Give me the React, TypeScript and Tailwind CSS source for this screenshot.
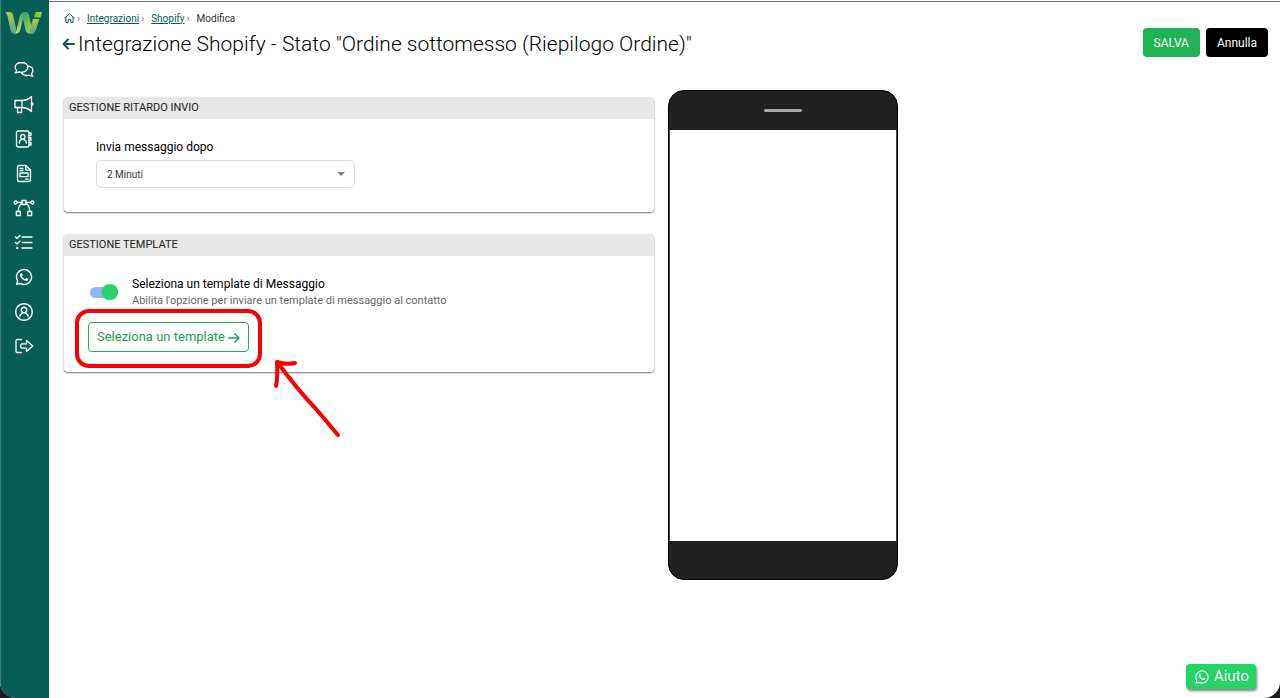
import { useState, type ReactNode } from "react";
import { LiaUserCircle, LiaWhatsapp } from "react-icons/lia";

function NavIcon({ children }: { children: ReactNode }) {
    return (
        <svg
            viewBox="0 0 22 22"
            className="size-[22px]"
            fill="none"
            stroke="currentColor"
            strokeWidth="1.3"
            strokeLinecap="round"
            strokeLinejoin="round"
            aria-hidden="true"
        >
            {children}
        </svg>
    );
}

const navItems: { label: string; icon: ReactNode }[] = [
    {
        label: "Chat",
        icon: (
            <NavIcon>
                <path d="M8.500 3.500C4.900 3.500 2.200 5.500 2.200 8.300c0 1.300.5 2.300 1.400 3.200-.1.900-.6 1.700-1.400 2.400 1.400 0 2.700-.4 3.700-1 .8.200 1.700.4 2.600.4 3.600 0 6.400-2.200 6.400-5s-2.800-4.800-6.400-4.800z" />
                <path d="M15.400 7.200c2.600.5 4.500 2.200 4.500 4.400 0 1.200-.5 2.200-1.400 3.100.1.900.6 1.800 1.400 2.500-1.400 0-2.700-.4-3.700-1-.7.200-1.500.3-2.400.3-2.300 0-4.200-.9-5.200-2.500" />
            </NavIcon>
        ),
    },
    {
        label: "Campagne",
        icon: (
            <NavIcon>
                <path d="M2 6.500h7v7H2zM9 6.500c3.500 0 6.500-1 9.500-4v15c-3-3-6-4-9.500-4M18.500 8.500c1 .2 1.500.7 1.500 1.500s-.5 1.300-1.500 1.500" />
                <path d="M4.500 13.500v5h4v-5" />
            </NavIcon>
        ),
    },
    {
        label: "Contatti",
        icon: (
            <NavIcon>
                <rect x="3.500" y="3" width="12.500" height="16" rx="1.800" />
                <circle cx="9.800" cy="8.700" r="2.200" />
                <path d="M6.300 15c0-2.200 1.400-3.600 3.500-3.600s3.500 1.400 3.500 3.600M16 5h2v2.500h-2M16 9.700h2v2.500h-2M16 14.500h2V17h-2" />
            </NavIcon>
        ),
    },
    {
        label: "Template",
        icon: (
            <NavIcon>
                <path d="M6.500 2.500H13L17.500 7v9.500c0 1.200-.8 2-2 2h-9c-1.200 0-2-.8-2-2v-12c0-1.200.8-2 2-2z" />
                <path d="M12.800 2.700v4.500h4.500M7 5.500h3M7 7.700h3M7 10h8v3.700H7zM12.500 16.200H15" />
            </NavIcon>
        ),
    },
    {
        label: "Integrazioni",
        icon: (
            <NavIcon>
                <path d="M9 3.500h4v4H9zM3.300 14.500h4v4h-4zM14.700 14.500h4v4h-4z" />
                <circle cx="2.600" cy="5.500" r="1.500" />
                <circle cx="19.400" cy="5.500" r="1.500" />
                <path d="M4.200 5.500H9M13 5.500h4.800M9 6.500c-2.500 1.200-3.700 4-3.700 8M13 6.500c2.500 1.200 3.700 4 3.700 8" />
            </NavIcon>
        ),
    },
    {
        label: "Report",
        icon: (
            <NavIcon>
                <path d="M9 5h10M9 10.500h10M9 16h10M2.500 5L4 6.500 7 3.500M2.500 10.500L4 12l3-3" />
                <circle cx="4.200" cy="16" r=".5" />
            </NavIcon>
        ),
    },
    { label: "WhatsApp", icon: <LiaWhatsapp className="size-[22px]" /> },
    { label: "Profilo", icon: <LiaUserCircle className="size-[22px]" /> },
    {
        label: "Esci",
        icon: (
            <NavIcon>
                <path d="M8.500 4.500H4.300c-.8 0-1.300.5-1.300 1.300v10.400c0 .8.500 1.300 1.300 1.300h4.200" />
                <path d="M13.500 5.500L19.700 11l-6.200 5.500v-3.300H9c-.7 0-1.200-.5-1.200-1.200V10c0-.7.5-1.200 1.200-1.200h4.500z" />
            </NavIcon>
        ),
    },
];

function Logo() {
    return (
        <svg viewBox="0 0 38 24" className="h-6 w-[38px]" fill="none" aria-hidden="true">
            <defs>
                <linearGradient id="stem" x1="0" y1="0" x2="0" y2="1">
                    <stop offset="0" stopColor="#b0c952" />
                    <stop offset="1" stopColor="#4fae7b" />
                </linearGradient>
                <linearGradient id="rise" x1="0" y1="1" x2="0" y2="0">
                    <stop offset="0" stopColor="#cfdc66" />
                    <stop offset="1" stopColor="#3fa679" />
                </linearGradient>
                <linearGradient id="fold" x1="0" y1="0" x2="1" y2="1">
                    <stop offset="0" stopColor="#2f9c74" />
                    <stop offset="1" stopColor="#c4d85c" />
                </linearGradient>
                <linearGradient id="dot" x1="0" y1="0" x2="1" y2="0">
                    <stop offset="0" stopColor="#6fb52c" />
                    <stop offset="1" stopColor="#b4d334" />
                </linearGradient>
            </defs>
            <path d="M0 1h4.500c2 0 3 1 3.500 3l3 13c.5 2 1 3.500 1 5.500H9.500c-2.500 0-3.500-1-4-3L2.500 5C2 3 1.500 2 0 1z" fill="url(#stem)" />
            <path d="M8.500 22.500c2 0 2.600-1.300 3-3L14.500 6c.8-3.200 2.500-5 6-5-1 1-1.300 2-1.700 3.500L15.500 18c-.7 2.900-2 4.500-4.500 4.500z" fill="url(#rise)" />
            <path d="M17.500 1h2.500c2.500 0 3.300 1 3.800 3l3.200 14c.5 2 .8 3 2 4.500h-4.500c-2.500 0-3.500-1.200-4-3.500L18 8z" fill="url(#fold)" />
            <path d="M25.500 22.500c-1.500 0-1.500-1.500-1-3L28 8h6.300l-3.100 10c-1 3-2.200 4.500-5.200 4.500z" fill="url(#stem)" />
            <path d="M30.500 1h6.500l-1.500 5.500H29z" fill="url(#dot)" />
        </svg>
    );
}

function Sidebar() {
    return (
        <aside className="flex w-[49px] shrink-0 flex-col items-center rounded-bl-xl border-l border-[#3d8177] bg-[#075e54] pt-[11px] pr-0.5">
            <a href="#home" aria-label="Home">
                <Logo />
            </a>
            <nav className="mt-6">
                <ul className="flex h-[298px] flex-col justify-between">
                    {navItems.map(({ label, icon }) => (
                        <li key={label}>
                            <a href={`#${label.toLowerCase()}`} aria-label={label} className="block text-white">
                                {icon}
                            </a>
                        </li>
                    ))}
                </ul>
            </nav>
        </aside>
    );
}

function Breadcrumbs() {
    return (
        <nav className="flex h-5 items-center text-[10px] text-[#333]">
            <a href="#home" aria-label="Home" className="text-[#075e54]">
                <svg viewBox="0 0 11 10" className="h-[10px] w-[11px]" fill="none" stroke="currentColor" aria-hidden="true">
                    <path d="M.7 5L5.500.8 10.300 5M1.900 4.200v5.200h2.300V6.300h2.600v3.100h2.300V4.200" strokeLinejoin="round" strokeLinecap="round" />
                </svg>
            </a>
            <span className="ml-0.5 text-gray-500">›</span>
            <a href="#integrazioni" className="ml-[7px] text-[#075e54] underline">Integrazioni</a>
            <span className="ml-0.5 text-gray-500">›</span>
            <a href="#shopify" className="ml-[7px] text-[#075e54] underline">Shopify</a>
            <span className="ml-0.5 text-gray-500">›</span>
            <span className="ml-[7px]">Modifica</span>
        </nav>
    );
}

function Card({ title, children }: { title: string; children: ReactNode }) {
    return (
        <section className="rounded-[4px] bg-white shadow-[0_1px_2px_rgba(0,0,0,0.55)]">
            <h2 className="rounded-t-[4px] bg-[#e7e7e7] px-[5px] text-[11px] leading-[22px] text-[#222]">{title}</h2>
            {children}
        </section>
    );
}

function PhonePreview() {
    return (
        <div className="flex h-[490px] w-[230px] shrink-0 flex-col overflow-hidden rounded-2xl border border-black bg-[#202020]">
            <div className="flex h-[39px] items-center justify-center">
                <span className="h-[3px] w-[38px] rounded-full bg-[#aaa6a8]" />
            </div>
            <div className="flex-1 border-x border-[#444] bg-white" />
            <div className="h-[38px]" />
        </div>
    );
}

// Hand drawn highlight around the template button
function Highlight() {
    return (
        <>
            <div className="pointer-events-none absolute -inset-x-[13px] -top-[13px] -bottom-4 rounded-[14px] border-4 border-[#f80000]" />
            <svg
                viewBox="0 0 68 80"
                className="pointer-events-none absolute top-[37px] left-[185px] h-20 w-[68px]"
                fill="none"
                stroke="#fb0000"
                strokeWidth="4"
                strokeLinecap="round"
                strokeLinejoin="round"
                aria-hidden="true"
            >
                <path d="M65 76L43 50Q24 30 5 4" />
                <path d="M3 27Q5 18 4 3Q13 6 22 4" />
            </svg>
        </>
    );
}

export default function App() {
    const [delay, setDelay] = useState("2");
    const [enabled, setEnabled] = useState(true);

    return (
        <div className="min-h-screen bg-[#1c1c1c] font-['Roboto',sans-serif]">
            <div className="flex min-h-screen overflow-hidden rounded-b-2xl bg-white">
                <Sidebar />

                <main className="mt-px min-w-0 flex-1 border-t border-gray-500 pr-3 pl-[15px]">
                    <header className="flex justify-between pt-1.5">
                        <div>
                            <Breadcrumbs />
                            <h1 className="-ml-0.5 flex items-center gap-[3px] text-[21px] leading-8 font-light text-black">
                                <a href="#shopify" aria-label="Indietro" className="text-[#075e54]">
                                    <svg viewBox="0 0 13 12" className="h-3 w-[13px]" fill="none" stroke="currentColor" strokeWidth="2" strokeLinecap="round" strokeLinejoin="round" aria-hidden="true">
                                        <path d="M12 6H1.500M6 1.500L1.500 6 6 10.500" />
                                    </svg>
                                </a>
                                Integrazione Shopify - Stato "Ordine sottomesso (Riepilogo Ordine)"
                            </h1>
                        </div>
                        <div className="mt-5 flex h-[29px] gap-1.5 text-[12px] text-white">
                            <button type="button" className="rounded-[4px] bg-[#1fb256] px-[11px]">SALVA</button>
                            <button type="button" className="rounded-[4px] bg-black px-[11px]">Annulla</button>
                        </div>
                    </header>

                    <div className="mt-[30px] flex gap-[14px]">
                        <div className="mt-[7px] flex w-[49%] flex-col gap-[22px]">
                            <Card title="GESTIONE RITARDO INVIO">
                                <div className="px-8 pt-[18px] pb-6">
                                    <label htmlFor="delay" className="block text-[12px] leading-5 text-black">
                                        Invia messaggio dopo
                                    </label>
                                    <div className="relative mt-[3px] w-[259px]">
                                        <select
                                            id="delay"
                                            value={delay}
                                            onChange={(e) => setDelay(e.target.value)}
                                            className="block h-7 w-full appearance-none rounded-[5px] border border-[#dcdcdc] bg-white px-2.5 text-[10px] text-[#333]"
                                        >
                                            <option value="2">2 Minuti</option>
                                            <option value="5">5 Minuti</option>
                                            <option value="10">10 Minuti</option>
                                        </select>
                                        <span className="pointer-events-none absolute top-3 right-2.5 border-x-4 border-t-4 border-x-transparent border-t-[#808080]" />
                                    </div>
                                </div>
                            </Card>

                            <Card title="GESTIONE TEMPLATE">
                                <div className="px-6 pt-[18px] pb-5">
                                    <label className="ml-0.5 flex items-center">
                                        <input
                                            type="checkbox"
                                            checked={enabled}
                                            onChange={(e) => setEnabled(e.target.checked)}
                                            className="peer sr-only"
                                        />
                                        <span className="mt-0.5 flex h-[11px] w-7 shrink-0 items-center rounded-full bg-gray-300 peer-checked:justify-end peer-checked:bg-[#93b4f8]">
                                            <span className="size-4 rounded-full bg-[#25d366] shadow-sm" />
                                        </span>
                                        <span className="ml-[14px]">
                                            <span className="block text-[12px] leading-5 text-black">
                                                Seleziona un template di Messaggio
                                            </span>
                                            <span className="block text-[11px] leading-[14px] text-[#666]">
                                                Abilita l'opzione per inviare un template di messaggio al contatto
                                            </span>
                                        </span>
                                    </label>
                                    <div className="relative mt-[14px] w-fit">
                                        <button
                                            type="button"
                                            className="flex h-[30px] items-center gap-[3px] rounded-[4px] border border-[#27a85a] px-2 text-[13px] text-[#1fa050]"
                                        >
                                            Seleziona un template
                                            <svg viewBox="0 0 12 12" className="mt-0.5 size-3" fill="none" stroke="currentColor" strokeWidth="1.5" strokeLinecap="round" strokeLinejoin="round" aria-hidden="true">
                                                <path d="M1 6h10M6.800 1.800L11 6l-4.200 4.200" />
                                            </svg>
                                        </button>
                                        <Highlight />
                                    </div>
                                </div>
                            </Card>
                        </div>

                        <PhonePreview />
                    </div>
                </main>
            </div>

            <a
                href="#aiuto"
                className="fixed right-6 bottom-[9px] flex h-[25px] items-center gap-[3px] rounded-[4px] bg-[#25d366] px-[7px] text-[15px] text-white shadow-[1px_2px_3px_rgba(0,0,0,0.5)]"
            >
                <LiaWhatsapp className="size-[18px]" />
                Aiuto
            </a>
        </div>
    );
}
